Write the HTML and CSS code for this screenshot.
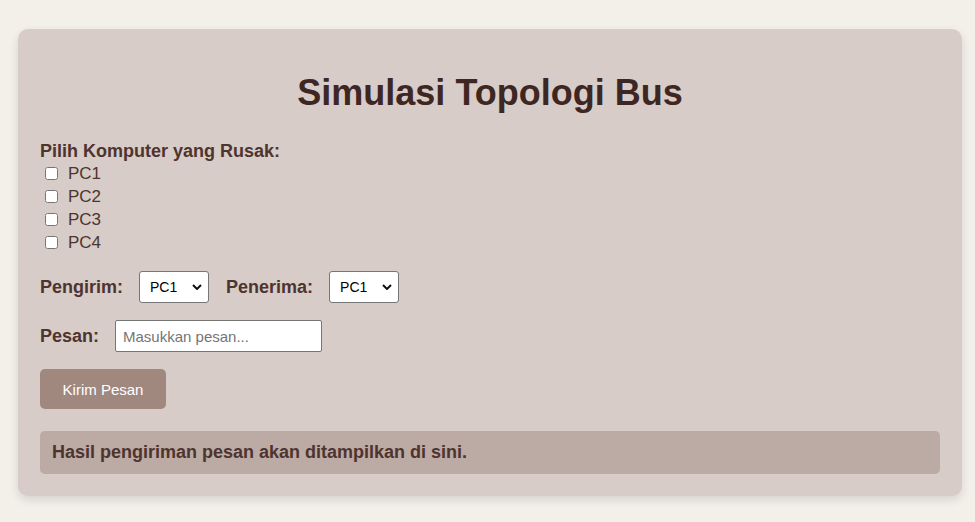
FILE: index.html
```html
<!DOCTYPE html>
<html lang="id">
<head>
<meta charset="utf-8">
<title>Simulasi Topologi Bus</title>
<link rel="stylesheet" href="styles.css">
</head>
<body>
<div class="container">
  <h1 class="title">Simulasi Topologi Bus</h1>
  <div class="group">
    <div class="group-label">Pilih Komputer yang Rusak:</div>
    <label class="check-row"><input type="checkbox" class="check"><span>PC1</span></label>
    <label class="check-row"><input type="checkbox" class="check"><span>PC2</span></label>
    <label class="check-row"><input type="checkbox" class="check"><span>PC3</span></label>
    <label class="check-row"><input type="checkbox" class="check"><span>PC4</span></label>
  </div>
  <div class="form-row">
    <span class="field-label">Pengirim:</span>
    <span class="select-wrap">
      <select class="select"><option>PC1</option><option>PC2</option><option>PC3</option><option>PC4</option></select>
      <svg class="chevron" width="10" height="6" viewBox="0 0 10 6"><path d="M1 1 L5 5 L9 1" fill="none" stroke="#111" stroke-width="2"/></svg>
    </span>
    <span class="field-label">Penerima:</span>
    <span class="select-wrap">
      <select class="select"><option>PC1</option><option>PC2</option><option>PC3</option><option>PC4</option></select>
      <svg class="chevron" width="10" height="6" viewBox="0 0 10 6"><path d="M1 1 L5 5 L9 1" fill="none" stroke="#111" stroke-width="2"/></svg>
    </span>
  </div>
  <div class="form-row">
    <span class="field-label">Pesan:</span>
    <input type="text" class="text-input" placeholder="Masukkan pesan...">
  </div>
  <div class="button-row">
    <button class="send-btn" type="button">Kirim Pesan</button>
  </div>
  <div class="result">Hasil pengiriman pesan akan ditampilkan di sini.</div>
</div>
</body>
</html>
```

FILE: styles.css
```css
html, body {
  margin: 0;
  padding: 0;
}
body {
  background: #f3f0ea;
  font-family: "Liberation Sans", Arial, sans-serif;
  color: #4e342e;
  padding: 29px 13px 26px 18px;
}
.container {
  background: #d7ccc8;
  border-radius: 10px;
  padding: 22px;
  box-shadow: 0 4px 10px rgba(0, 0, 0, 0.12);
}
.title {
  margin: 22px 0 0;
  text-align: center;
  font-size: 36px;
  line-height: 40px;
  font-weight: bold;
  color: #3e2723;
}
.group {
  margin-top: 28px;
}
.group-label {
  font-size: 18px;
  font-weight: bold;
  line-height: 21px;
}
.check-row {
  display: flex;
  align-items: center;
  height: 23px;
  font-size: 17px;
  color: #4e342e;
}
.check {
  width: 13px;
  height: 13px;
  margin: 0 10px 0 5px;
}
.form-row {
  display: flex;
  align-items: center;
  margin-top: 17px;
}
.field-label {
  font-size: 18px;
  font-weight: bold;
  margin-right: 16px;
}
.select-wrap {
  position: relative;
  display: inline-flex;
  margin-right: 17px;
}
.select {
  appearance: none;
  -webkit-appearance: none;
  width: 70px;
  height: 32px;
  font-family: "Liberation Sans", Arial, sans-serif;
  font-size: 14px;
  padding: 0 20px 0 10px;
  margin: 0;
  background: #fff;
  border: 1px solid #767676;
  border-radius: 3px;
  color: #000;
}
.chevron {
  position: absolute;
  right: 7px;
  top: 13px;
  pointer-events: none;
}
.text-input {
  width: 207px;
  height: 32px;
  box-sizing: border-box;
  font-family: "Liberation Sans", Arial, sans-serif;
  font-size: 15px;
  padding: 0 7px;
  border: 1px solid #767676;
  border-radius: 2px;
  background: #fff;
}
.text-input::placeholder {
  color: #757575;
}
.button-row {
  margin-top: 17px;
}
.send-btn {
  width: 126px;
  height: 40px;
  border: none;
  border-radius: 5px;
  background: #a1887f;
  color: #fff;
  font-family: "Liberation Sans", Arial, sans-serif;
  font-size: 15px;
  padding: 0;
}
.result {
  margin-top: 22px;
  background: #bcaaa4;
  border-radius: 5px;
  padding: 11px 12px;
  font-size: 18px;
  line-height: 21px;
  font-weight: bold;
}
```
